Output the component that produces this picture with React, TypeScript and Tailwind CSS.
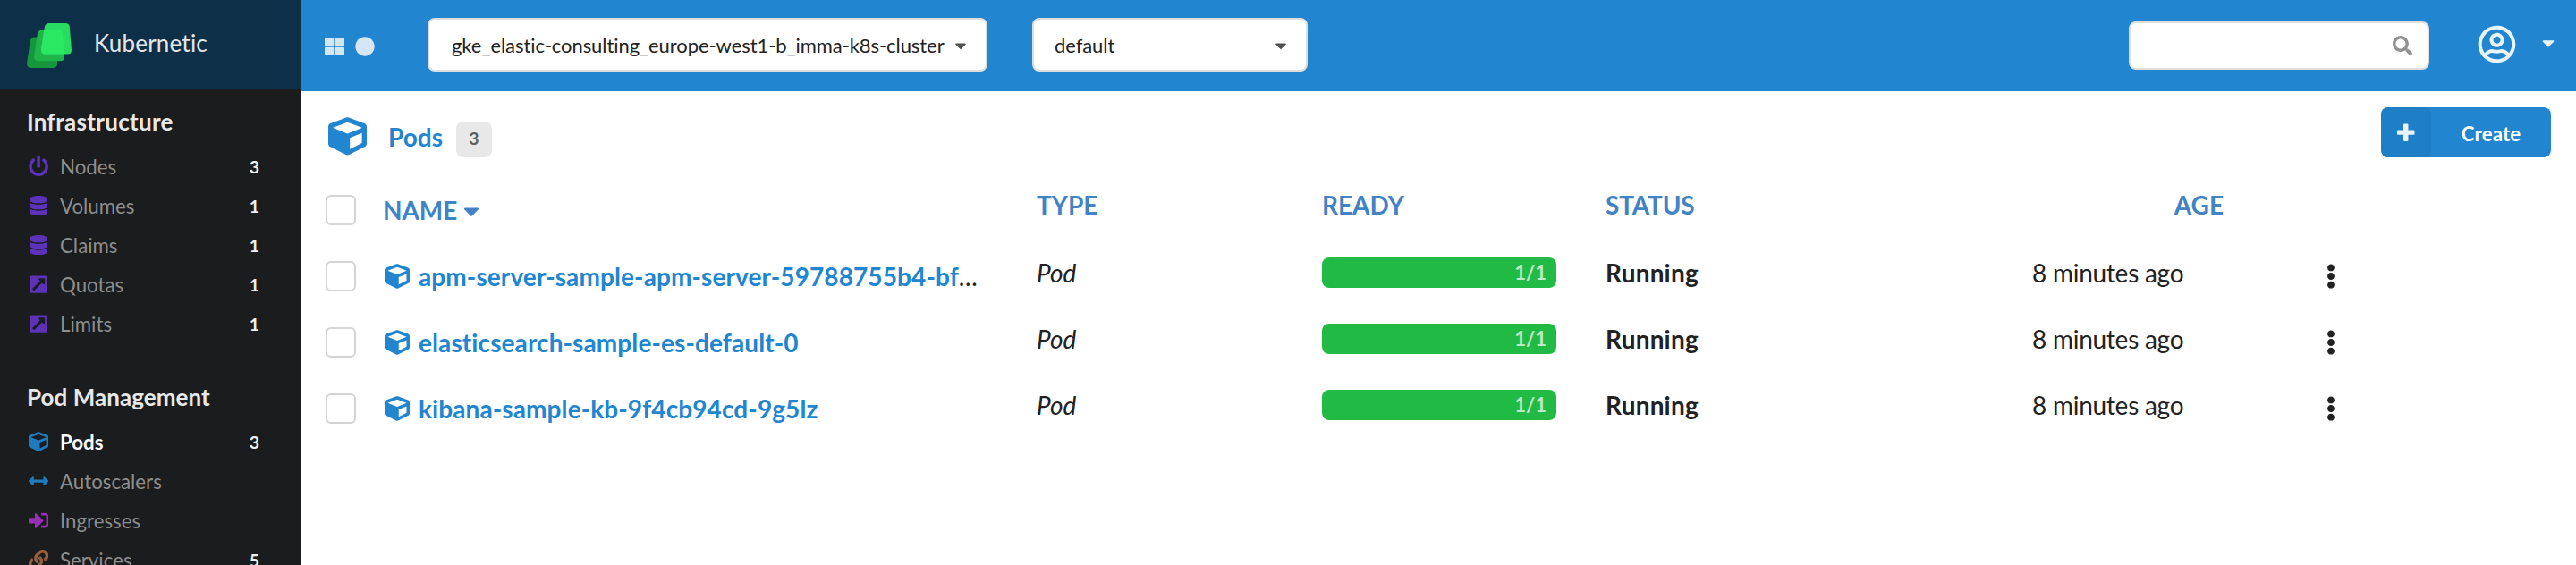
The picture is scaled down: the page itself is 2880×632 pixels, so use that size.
import React from "react";
import type { IconType } from "react-icons";
import {
  FaArrowsAltH,
  FaCaretDown,
  FaCircle,
  FaCube,
  FaDatabase,
  FaEllipsisV,
  FaExternalLinkSquareAlt,
  FaLink,
  FaPowerOff,
  FaRegUserCircle,
  FaSearch,
  FaSignInAlt,
  FaThLarge,
} from "react-icons/fa";

type NavItem = { label: string; count?: number; icon: IconType; color: string; active?: boolean };

const infrastructure: NavItem[] = [
  { label: "Nodes", count: 3, icon: FaPowerOff, color: "text-[#6435c9]" },
  { label: "Volumes", count: 1, icon: FaDatabase, color: "text-[#6435c9]" },
  { label: "Claims", count: 1, icon: FaDatabase, color: "text-[#6435c9]" },
  { label: "Quotas", count: 1, icon: FaExternalLinkSquareAlt, color: "text-[#6435c9]" },
  { label: "Limits", count: 1, icon: FaExternalLinkSquareAlt, color: "text-[#6435c9]" },
];

const podManagement: NavItem[] = [
  { label: "Pods", count: 3, icon: FaCube, color: "text-[#2185d0]", active: true },
  { label: "Autoscalers", icon: FaArrowsAltH, color: "text-[#2185d0]" },
  { label: "Ingresses", icon: FaSignInAlt, color: "text-[#a333c8]" },
  { label: "Services", count: 5, icon: FaLink, color: "text-[#a5673f]" },
];

const pods = [
  { name: "apm-server-sample-apm-server-59788755b4-bf", clipped: true },
  { name: "elasticsearch-sample-es-default-0", clipped: false },
  { name: "kibana-sample-kb-9f4cb94cd-9g5lz", clipped: false },
];

const columns = "grid grid-cols-[66px_729px_319px_317px_477px_214px_1fr] h-[74px] items-center pl-7";

function Logo() {
  return (
    <svg className="mt-0.5 size-[50px] shrink-0" viewBox="0 0 50 50">
      <path fill="#16963a" d="M8.5 15.5h19.5q4 0 4.5 4l1.6 25.5q0 5-5 5H5q-5 0-5-5L3.8 20q.7-4.5 4.7-4.5z" />
      <path fill="#1fb54a" d="M16.5 7.7h19q4 0 4.5 4l2 26q0 4.5-5 4.5H13q-5 0-5-5L11.8 12.2q.7-4.5 4.7-4.5z" />
      <path fill="#27dc60" d="M25 0h18q4.3 0 4.8 4l2.2 26q0 4.5-4.5 4.5H21q-5.3 0-5-5L19.8 4.5Q20.5 0 25 0z" />
      <path fill="#2ae861" d="M19.3 7.7h16.2q4 0 4.5 4l1.9 22.8H21q-5.3 0-5-5z" />
    </svg>
  );
}

function Section({ title, items, tracking }: { title: string; items: NavItem[]; tracking: string }) {
  return (
    <section className="mb-[38px]">
      <h2 className={`mb-[6px] h-11 pl-[30px] text-[26px] leading-[44px] font-bold text-[#e8e8e8] ${tracking}`}>{title}</h2>
      {items.map(({ label, count, icon: Icon, color, active }) => (
        <div key={label} className="flex h-11 items-center pr-[46px] pl-[30px] text-[22.28px] leading-[44px]">
          <span className={`flex w-[26px] shrink-0 justify-center opacity-90 ${color}`}>
            <Icon />
          </span>
          <span className={`mt-px ml-[11px] flex-1 ${active ? "font-bold text-white" : "text-[#8d8e8e]"}`}>{label}</span>
          {count !== undefined && <span className="mt-[2px] text-[19.5px] font-bold text-[#f0f0f0]">{count}</span>}
        </div>
      ))}
    </section>
  );
}

function Select({ value, size }: { value: string; size: string }) {
  return (
    <div
      className={`flex h-[60px] items-center justify-between rounded-lg border-2 border-[#dedede] bg-white pr-[18px] text-[22px] tracking-[-0.07px] text-[#222] ${size}`}
    >
      <span className="mt-px whitespace-nowrap">{value}</span>
      <FaCaretDown className="mt-px size-[20px] text-[#505050]" />
    </div>
  );
}

function Checkbox() {
  return <span className="size-[34px] rounded-[6px] border-2 border-[#d4d4d5] bg-white" />;
}

export default function App() {
  return (
    <div className="flex h-[632px] w-[2880px] overflow-hidden bg-white font-['Lato',sans-serif] text-[#222] [font-variant-ligatures:none]">
      <aside className="h-full w-[336px] shrink-0 overflow-hidden bg-[#1b1c1d]">
        <div className="flex h-[100px] items-center bg-[#0d2f48] pl-[30px]">
          <Logo />
          <span className="mb-1 ml-[25px] text-[26px] tracking-[0.2px] text-[#e2e6e9]">Kubernetic</span>
        </div>
        <div className="pt-[14px]">
          <Section title="Infrastructure" items={infrastructure} tracking="tracking-[0.3px]" />
          <Section title="Pod Management" items={podManagement} tracking="tracking-[0.05px]" />
        </div>
      </aside>

      <main className="min-w-0 flex-1">
        <header className="flex h-[102px] bg-[#2185d0]">
          <div className="flex h-[104px] items-center gap-3 pl-[27px] text-[22px] text-[#d5e7f6]">
            <FaThLarge />
            <FaCircle />
          </div>
          <div className="mt-5 ml-[59px] flex gap-[50px]">
            <Select value="gke_elastic-consulting_europe-west1-b_imma-k8s-cluster" size="w-[626px] pl-[25px]" />
            <Select value="default" size="w-[308px] pl-[23px]" />
          </div>
          <div className="mt-6 ml-auto flex h-[54px] w-[336px] items-center justify-end rounded-lg border-2 border-[#dedede] bg-white pr-[17px]">
            <FaSearch className="size-[22px] text-[#919191]" />
          </div>
          <FaRegUserCircle className="mt-[28px] ml-[54px] size-[43px] text-[#e9f3fa]" />
          <FaCaretDown className="mt-[37px] mr-[20px] ml-[25px] size-[22px] text-[#e9f3fa]" />
        </header>

        <div className="flex h-[96px] pr-7 pl-[31px]">
          <FaCube className="mt-[29px] size-[43px] text-[#2185d0]" />
          <h1 className="mt-[34px] ml-6 w-[62px] text-[28px] leading-[34px] font-bold text-[#2185d0]">Pods</h1>
          <span className="mt-[34px] ml-[14px] flex h-10 w-10 items-center justify-center rounded-lg bg-[#e8e8e8] pb-[2px] text-[19.5px] font-bold text-[#5d5d5d]">
            3
          </span>
          <button className="mt-[18px] ml-auto flex h-14 w-[190px] items-stretch overflow-hidden rounded-lg bg-[#2185d0] text-white">
            <span className="flex w-14 items-center justify-center rounded-lg bg-[#1f7fc6]">
              <svg className="mt-px h-[22.3px] w-[19.5px]" viewBox="0 0 448 512" fill="#e9f3fa">
                <path d="M448 294.2v-76.4c0-13.3-10.7-24-24-24H286.2V56c0-13.3-10.7-24-24-24h-76.4c-13.3 0-24 10.7-24 24v137.8H24c-13.3 0-24 10.7-24 24v76.4c0 13.3 10.7 24 24 24h137.8V456c0 13.3 10.7 24 24 24h76.4c13.3 0 24-10.7 24-24V318.2H424c13.3 0 24-10.7 24-24z" />
              </svg>
            </span>
            <span className="flex-1 pt-[2px] text-center text-[22.28px] leading-[56px] font-bold tracking-[0.1px]">Create</span>
          </button>
        </div>

        <div className="text-[28px] leading-[34px]">
          <div className={`${columns} font-bold text-[#4183c4]`}>
            <Checkbox />
            <span className="flex items-center">
              <span className="-ml-[2px] tracking-[-0.1px]">NAME</span>
              <FaCaretDown className="mt-px ml-[2px] size-[28px]" />
            </span>
            <span className="mb-3">TYPE</span>
            <span className="mb-3">READY</span>
            <span className="mb-3 tracking-[-0.2px]">STATUS</span>
            <span className="mb-3 text-right">AGE</span>
          </div>
          {pods.map((pod) => (
            <div key={pod.name} className={columns}>
              <Checkbox />
              <span className="flex items-center whitespace-nowrap">
                <FaCube className="mb-px size-[28px] text-[#2185d0]" />
                <a className="ml-[10px] font-bold tracking-[0.1px] text-[#2185d0]">{pod.name}</a>
                {pod.clipped && <span>…</span>}
              </span>
              <span className="mb-2 italic">Pod</span>
              <div className="mb-2 flex h-[34px] w-[262px] items-center justify-end rounded-lg bg-[#21ba45] pr-[11px] text-[22px] font-bold text-[#bceac7]">
                1/1
              </div>
              <span className="mb-2 font-bold tracking-[0.2px]">Running</span>
              <span className="mb-2 tracking-[-0.25px]">8 minutes ago</span>
              <FaEllipsisV className="ml-[106px] size-[28px]" />
            </div>
          ))}
        </div>
      </main>
    </div>
  );
}
